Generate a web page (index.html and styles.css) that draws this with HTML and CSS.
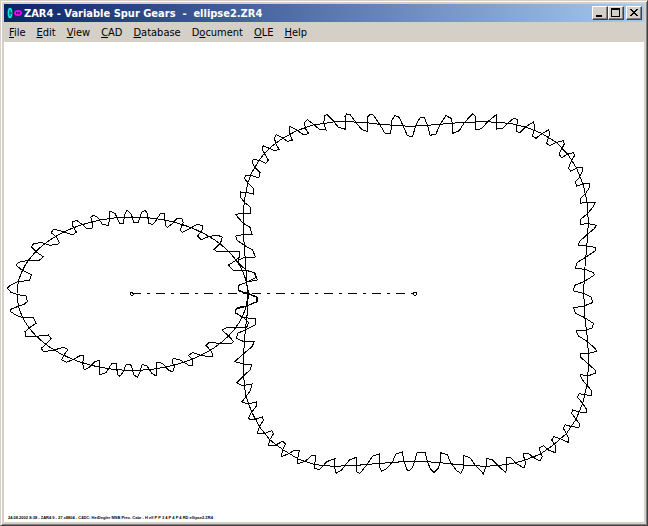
FILE: index.html
```
<!DOCTYPE html>
<html lang="en">
<head>
    <meta charset="UTF-8">
    <meta name="viewport" content="width=device-width, initial-scale=1.0">
    <title>ZAR4 - Variable Spur Gears</title>
    <link rel="stylesheet" href="styles.css">
</head>
<body>
    <div class="window">
        <header class="title-bar">
            <svg class="app-icon" viewBox="0 0 16 16" aria-hidden="true">
                <ellipse cx="4" cy="8" rx="3" ry="6" fill="#00e8e8" stroke="#002828"/>
                <path d="M4 5v6M3 8h3" stroke="#004040"/>
                <ellipse cx="12" cy="8" rx="4" ry="3" fill="#f000f0"/>
                <path d="M10 7h4v2h-4z" fill="#400060"/>
                <path d="M11 8h2" stroke="#f000f0"/>
            </svg>
            <h1 class="title">ZAR4 - Variable Spur Gears&nbsp; -&nbsp; ellipse2.ZR4</h1>
            <div class="window-buttons">
                <button type="button" aria-label="Minimize"><svg viewBox="0 0 12 10"><path d="M2 7h6v2H2z"/></svg></button>
                <button type="button" aria-label="Maximize"><svg viewBox="0 0 12 10"><path fill-rule="evenodd" d="M1 0h9v9H1zM2 2v6h7V2z"/></svg></button>
                <button type="button" class="close" aria-label="Close"><svg viewBox="0 0 12 10"><path d="M2 1h2v1h1v1h2V2h1V1h2v1H9v1H8v1H7v1h1v1h1v1h1v1H8V7H7V6H5v1H4v1H2V7h1V6h1V5h1V4H4V3H3V2H2z"/></svg></button>
            </div>
        </header>

        <nav class="menu-bar">
            <button type="button"><u>F</u>ile</button>
            <button type="button"><u>E</u>dit</button>
            <button type="button"><u>V</u>iew</button>
            <button type="button"><u>C</u>AD</button>
            <button type="button"><u>D</u>atabase</button>
            <button type="button">D<u>o</u>cument</button>
            <button type="button"><u>O</u>LE</button>
            <button type="button"><u>H</u>elp</button>
        </nav>

        <main class="drawing">
            <svg class="gears" viewBox="12 126 1920 1440" role="img" aria-label="Elliptical gear pair">
                <!-- gear 1 -->
                <ellipse cx="397" cy="881" rx="346" ry="230"/>
                <g transform="translate(0 600)">
                    <polyline points="390,38 381,31 374,45 370,69 358,69 345,40 330,34 326,76 308,74 293,52 280,46 272,52 276,62 277,84 260,85 245,72 230,61 216,66 218,78 229,96 219,105 200,99 180,92 160,88 154,98 172,115 178,128 172,133 150,136 122,127 100,132 94,140 110,157 130,170 118,181 85,181 55,187 49,196 65,210 95,224 88,242 55,244 30,256 22,265 33,277 50,283 78,288 82,305 72,313 52,320 32,328 32,335 50,347 66,352 100,352 108,370 90,382 75,395 76,408 108,409 145,405 154,415 137,433 124,445 130,455 162,450 190,442 204,448 190,468 185,480 200,487 222,477 240,467 252,468 248,490 253,510 270,500 285,485 299,481 299,524 318,518 335,491 348,490 353,525 360,529 370,515 378,494 390,493"/>
                </g>
                <g transform="translate(390 600)">
                    <polyline points="0,38 5,46 12,69 24,68 30,50 36,36 46,31 52,40 56,70 68,73 78,62 90,42 103,41 106,75 112,82 126,72 140,56 155,54 160,68 150,90 158,97 180,85 200,74 218,76 218,88 203,108 214,119 235,110 262,105 277,112 272,128 252,148 262,156 300,154 328,156 330,170 316,182 296,195 308,210 350,211 372,218 378,232 352,246 326,256 324,270 356,282 380,292 382,304 350,318 318,328 316,338 340,352 356,368 350,382 288,384 276,390 300,412 310,425 302,432 268,430 238,427 228,436 245,455 248,470 240,471 214,466 188,458 176,466 188,480 188,496 175,495 150,480 130,475 126,486 133,500 128,516 115,510 98,490 80,487 78,528 66,520 50,496 36,494 30,515 22,532 12,525 4,498 0,493"/>
                </g>

                <!-- gear 2, one group per quadrant -->
                <g transform="translate(690 300)">
                    <polyline points="540,109 532,106 520,80 508,52 495,47 486,60 482,102 465,100 450,75 430,45 420,43 413,50 413,95 395,88 380,70 360,43 350,42 345,50 347,88 325,82 310,63 290,43 284,48 281,70 288,90 268,88 252,74 232,59 224,68 226,85 236,101 220,104 200,90 180,79 177,88 180,105 187,121 172,124 158,114 138,104 133,114 138,132 147,148 135,153 118,145 100,137 96,148 103,160 115,180 108,190 90,182 70,177 66,188 76,203 90,218 86,234 64,226 46,226 44,236 55,250 70,265 70,282 50,277 32,276 30,290 43,307 62,322 63,340 35,339 17,344 40,370 60,382 66,403 38,404 17,408 20,420 43,436 68,450 76,471 45,472 24,480 28,492 50,512 75,518 82,540 52,546 26,556 24,570"/>
                    <polyline points="52,570 46,480 40,400 40,345 43,300 53,250 65,218 85,185 103,160 130,135 158,115 200,92 250,75 310,66 350,65 410,68 450,73 540,79"/>
                </g>
                <g transform="translate(1230 300)">
                    <polyline points="0,109 8,108 18,75 30,53 43,53 53,78 60,106 78,102 90,73 108,47 123,55 128,75 128,100 148,92 163,68 188,41 195,48 195,90 215,86 232,66 260,43 261,87 278,86 293,70 312,54 323,60 320,80 320,95 330,97 345,82 370,66 375,80 367,108 378,115 397,100 415,90 420,100 410,130 420,137 440,127 460,122 463,132 447,162 455,173 472,163 490,158 494,166 483,185 475,205 482,213 500,204 518,203 518,213 508,232 496,246 500,258 520,252 538,250 540,260 527,280 510,298 510,310 532,306 556,308 550,320 533,340 512,358 512,373 535,371 559,376 553,386 530,405 508,425 504,437 530,438 555,442 556,452 530,470 502,487 496,505 525,508 550,518 553,525 522,545 494,556 490,570"/>
                    <polyline points="0,79 50,76 100,72 160,67 230,65 300,70 350,82 395,100 440,128 475,165 500,205 520,255 532,310 535,370 531,430 525,500 521,570"/>
                </g>
                <g transform="translate(690 870)">
                    <polyline points="24,0 30,5 56,10 82,22 80,36 50,48 22,52 15,68 38,82 78,87 76,105 46,120 22,130 20,145 44,156 73,155 66,170 40,192 14,215 40,222 65,222 62,238 40,258 20,278 38,287 66,282 62,300 48,320 35,336 55,342 79,336 78,350 65,366 54,386 72,390 98,380 100,392 88,410 82,430 105,430 125,422 130,432 120,448 115,466 135,466 158,454 166,462 158,480 153,500 175,492 195,480 208,482 204,500 202,522 225,514 245,497 258,498 255,515 254,536 270,538 290,515 315,506 313,530 318,550 335,540 358,510 379,502 380,545 390,550 410,525 428,498 448,492 448,530 455,543 470,536 488,515 497,492 517,486 522,515 532,541 540,541"/>
                    <polyline points="540,514 520,515 450,520 380,526 310,529 255,524 205,507 160,480 120,450 88,410 65,366 48,320 43,285 40,240 41,190 46,120 53,60 55,0"/>
                </g>
                <g transform="translate(1230 870)">
                    <polyline points="0,541 8,532 22,486 45,486 52,515 62,538 72,547 85,535 91,516 91,488 112,494 122,518 140,542 152,550 160,535 161,497 180,503 195,525 220,551 228,530 228,506 245,508 262,525 287,548 291,525 288,502 303,504 318,520 342,534 347,520 339,492 355,490 370,502 390,513 397,500 387,474 400,467 415,480 436,488 438,470 425,450 432,440 450,446 475,457 474,440 460,415 466,404 485,410 507,412 508,400 498,388 485,370 488,360 510,366 528,368 528,355 518,340 503,322 507,311 530,315 545,315 545,302 530,285 514,265 512,254 536,257 556,250 555,240 535,222 512,202 510,190 535,190 560,184 555,175 530,153 505,138 498,121 525,121 548,113 550,100 523,82 496,70 491,53 520,49 547,38 545,22 520,10 491,3 490,0"/>
                    <polyline points="521,0 524,80 533,150 536,220 531,285 518,340 498,388 470,430 430,465 390,493 340,512 290,524 228,529 160,525 90,518 50,515 0,514"/>
                </g>

                <!-- centre line and shafts -->
                <path class="axis" d="M395 881H1240"/>
                <circle cx="395" cy="881" r="5"/>
                <circle cx="1245" cy="881" r="5"/>
            </svg>
            <p class="footnote">24.08.2002 8:38 - ZAR4 9 - 27 x8804 - C4DC: HeiDegler MSB Prec. Cabr - H ell P P 3 4 P 4 P 4 RD ellipse2.ZR4</p>
        </main>
    </div>
</body>
</html>
```

FILE: styles.css
```
body {
    margin: 0;
    background: #d4d0c8;
    font-family: "DejaVu Sans Condensed", "DejaVu Sans", sans-serif;
    font-size: 11px;
    color: #000;
}
.window {
    box-sizing: border-box;
    min-height: 100vh;
    display: flex;
    flex-direction: column;
    padding: 3px;
    border: 1px solid;
    border-color: #d4d0c8 #404040 #404040 #d4d0c8;
    box-shadow: inset 1px 1px #fff, inset -1px -1px #808080;
    background: #d4d0c8;
}
.title-bar {
    display: flex;
    align-items: center;
    height: 18px;
    padding: 0 2px;
    background: linear-gradient(to right, #0a246a, #a6caf0);
}
.app-icon {
    width: 16px;
    height: 16px;
    margin-right: 2px;
}
.title {
    flex: 1;
    margin: 0;
    font-size: 11px;
    font-weight: bold;
    color: #fff;
    white-space: nowrap;
}
.window-buttons {
    display: flex;
}
.window-buttons button {
    width: 16px;
    height: 14px;
    padding: 0;
    border: 1px solid;
    border-color: #fff #404040 #404040 #fff;
    box-shadow: inset -1px -1px #808080;
    background: #d4d0c8;
}
.window-buttons .close {
    margin-left: 2px;
}
.window-buttons svg {
    display: block;
    width: 12px;
    height: 10px;
    margin: 1px;
    shape-rendering: crispEdges;
}
.menu-bar {
    display: flex;
    gap: 1px;
    height: 20px;
}
.menu-bar button {
    padding: 0 5px;
    border: 0;
    background: none;
    font: inherit;
}
.drawing {
    position: relative;
    flex: 1;
    background: #fff;
}
.gears {
    display: block;
    width: 100%;
    height: auto;
    fill: none;
    stroke: #000;
    stroke-width: 3;
    shape-rendering: crispEdges;
}
.axis {
    stroke-dasharray: 27 18 9 18;
}
.footnote {
    position: absolute;
    left: 4px;
    bottom: 2px;
    margin: 0;
    font-family: "Liberation Sans", sans-serif;
    font-size: 4px;
    font-weight: bold;
    line-height: 5px;
    white-space: nowrap;
}
```
